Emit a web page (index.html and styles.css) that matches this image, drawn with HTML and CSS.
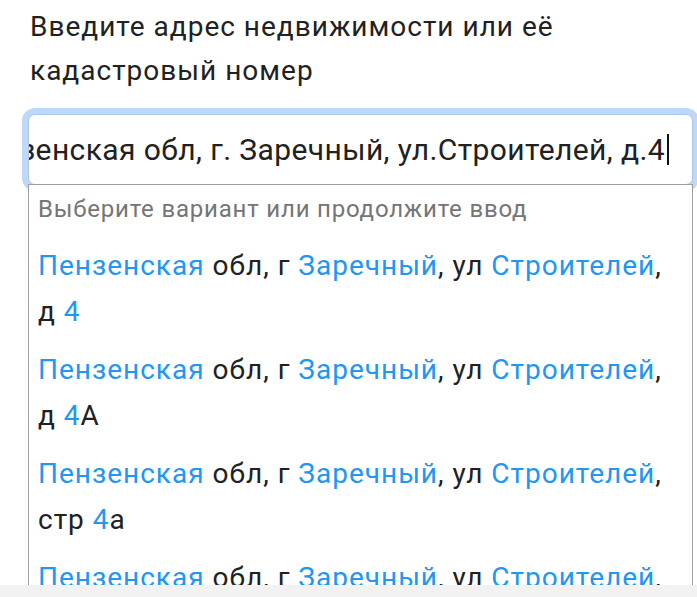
FILE: index.html
```html
<html>
<head>
<meta charset="utf-8">
<title>Поиск объекта</title>
<link rel="stylesheet" href="styles.css">
</head>
<body>
<div class="page">
	<h1 class="title">Введите адрес недвижимости или её кадастровый номер</h1>

	<div class="search">
		<div class="field">
			<span class="value">Пензенская обл, г. Заречный, ул.Строителей, д.4</span><span class="caret"></span>
		</div>

		<div class="dropdown">
			<div class="hint">Выберите вариант или продолжите ввод</div>
			<div class="option"><span class="hl">Пензенская</span> обл, г <span class="hl">Заречный</span>, ул <span class="hl">Строителей</span>, д&nbsp;<span class="hl">4</span></div>
			<div class="option"><span class="hl">Пензенская</span> обл, г <span class="hl">Заречный</span>, ул <span class="hl">Строителей</span>, д&nbsp;<span class="hl">4</span>А</div>
			<div class="option"><span class="hl">Пензенская</span> обл, г <span class="hl">Заречный</span>, ул <span class="hl">Строителей</span>, стр&nbsp;<span class="hl">4</span>а</div>
			<div class="option"><span class="hl">Пензенская</span> обл, г <span class="hl">Заречный</span>, ул <span class="hl">Строителей</span>, д&nbsp;<span class="hl">4</span>Б</div>
		</div>
	</div>
</div>
<div class="navbar"></div>
</body>
</html>
```

FILE: styles.css
```css
body {margin: 0; background: #fff; font-family: Roboto, "Noto Sans", sans-serif; color: #212121; overflow: hidden;}

.page {padding: 5px 5px 0 28px;}

.title {font-size: 28px; font-weight: normal; line-height: 44px; letter-spacing: 1px; margin: 0 0 21px 2px; max-width: 580px;}

/* Input with focus ring */
.search {width: 665px;}
.field {
	display: flex;
	justify-content: flex-end;
	align-items: center;
	overflow: hidden;
	height: 69px;
	padding: 0 23px 0 3px;
	border: 1px solid #a9c6ee;
	border-radius: 7px;
	box-shadow: 0 0 0 6px #c0d8f8;
	background: #fff;
	white-space: nowrap;
	font-size: 30px;
}
.value {flex-shrink: 0; letter-spacing: 0.4px;}
.caret {flex-shrink: 0; width: 2px; height: 31px; margin-left: 2px; background: #111;}

/* Suggestions */
.dropdown {
	position: relative;
	z-index: 1;
	margin-top: -1px;
	padding: 9px 9px 0 9px;
	border: 1px solid #9e9e9e;
	border-bottom: 0;
	background: #fff;
	height: 405px;
	overflow: hidden;
}
.hint {font-size: 24px; line-height: 30px; letter-spacing: 0.8px; color: #757575; margin-bottom: 13px;}
.option {font-size: 28px; line-height: 46px; letter-spacing: 1px; padding: 6px 0;}
.hl {color: #2196f3;}

.navbar {position: fixed; left: 0; right: 0; bottom: 0; height: 12px; background: #f2f2f2; z-index: 2;}
```
